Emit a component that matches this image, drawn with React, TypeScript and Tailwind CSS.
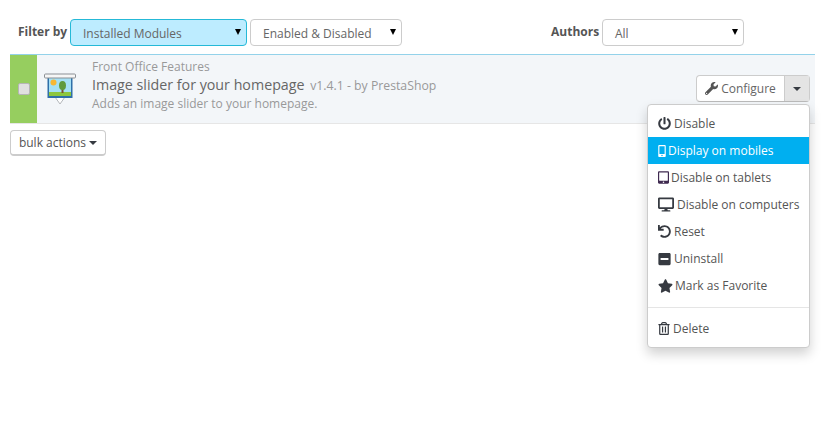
import { FaPowerOff, FaMobileAlt, FaTabletAlt, FaDesktop, FaUndo, FaMinusSquare, FaStar, FaRegTrashAlt, FaWrench } from "react-icons/fa";
import type { ReactNode } from "react";

const font = { fontFamily: '"Open Sans", sans-serif' };

const Select = ({ label, className }: { label: string; className: string }) => (
  <div className={`h-[27px] flex items-center justify-between rounded border pl-[12px] pr-[5px] text-[12px] text-[#666] ${className}`}>
    <span className="pt-[3px]">{label}</span>
    <span className="mb-[1px] border-x-[3.5px] border-x-transparent border-t-[6px] border-t-black" />
  </div>
);

const SliderIcon = () => (
  <svg width="32" height="32" viewBox="0 0 32 32">
    <path d="M11 24l5 7 5-7z" fill="#fff" stroke="#b4b8bc" />
    <rect x="3.5" y="5" width="25" height="20" fill="#2f6fa8" />
    <rect x="5" y="5" width="22" height="18" fill="#a5e0f5" />
    <rect x="5" y="19" width="22" height="4" fill="#8cc63f" />
    <circle cx="9.5" cy="9.5" r="3" fill="#f7b733" />
    <rect x="17.5" y="14" width="2" height="6" fill="#7a5230" />
    <ellipse cx="18.5" cy="12.5" rx="3.5" ry="4.5" fill="#5f9a3c" />
    <rect x="0.5" y="1" width="31" height="4" rx="1" fill="#f6f6f6" stroke="#8a8f94" />
  </svg>
);

const Item = ({ icon, label, active, gap }: { icon: ReactNode; label: string; active?: boolean; gap: string }) => (
  <div className={`h-[27px] flex items-center pl-[10px] text-[12px] ${gap} ${active ? "bg-[#00aff0] text-white" : "text-[#555]"}`}>
    {icon}
    <span>{label}</span>
  </div>
);

export default function App() {
  return (
    <div className="w-[835px] h-[424px] bg-white pt-[19px] relative overflow-hidden" style={font}>
      <div className="flex items-center pl-[18px] h-[27px]">
        <span className="w-[52px] text-[12px] font-bold text-[#555] mb-[2px]">Filter by</span>
        <Select label="Installed Modules" className="w-[177px] bg-[#bdecff] border-[#25b9d7]" />
        <Select label="Enabled & Disabled" className="w-[152px] ml-[3px] border-[#ccc]" />
        <span className="ml-[149px] w-[51px] text-[12px] font-bold text-[#555] mb-[2px]">Authors</span>
        <Select label="All" className="w-[142px] border-[#ccc]" />
      </div>

      <div className="mt-[8px] mx-[10px] w-[805px] h-[70px] flex bg-[#f3f6f9] border-t border-b border-t-[#93d2ea] border-b-[#e6e6e6]">
        <div className="w-[27px] bg-[#96ce5f] flex items-center justify-center">
          <span className="w-[12px] h-[12px] rounded-[2px] bg-[#e0e0e0] border border-[#b5b5b5]" />
        </div>
        <div className="w-[55px] flex items-center pl-[7px]">
          <SliderIcon />
        </div>
        <div className="flex-1 pt-[4px] text-[#999]">
          <div className="text-[12px] leading-[16px]">Front Office Features</div>
          <div className="text-[14.25px] leading-[20px] text-[#666]">
            Image slider for your homepage <span className="ml-[2px] text-[12.25px] text-[#999]">v1.4.1 - by PrestaShop</span>
          </div>
          <div className="text-[12px] leading-[16px]">Adds an image slider to your homepage.</div>
        </div>
        <div className="flex h-[27px] mt-[20px] mr-[5px] rounded border border-[#ccc] border-b-[#bbb] bg-white text-[12px] text-[#666]">
          <div className="w-[88px] flex items-center justify-center gap-[3px] border-r border-[#ccc]">
            <FaWrench className="w-[13px] h-[13px] text-[#555]" />
            <span>Configure</span>
          </div>
          <div className="w-[24px] bg-[#e4e4e4] flex items-center justify-center">
            <span className="border-x-[4px] border-x-transparent border-t-[4px] border-t-[#363a41]" />
          </div>
        </div>
      </div>

      <div className="mt-[6px] ml-[10px] w-[96px] h-[26px] flex items-center justify-center gap-[3px] rounded border border-[#ccc] border-b-2 bg-white text-[12px] text-[#555]">
        <span>bulk actions</span>
        <span className="border-x-[4px] border-x-transparent border-t-[4px] border-t-[#363a41]" />
      </div>

      <div className="absolute left-[647px] top-[104px] w-[163px] h-[244px] bg-white rounded border border-[#ccc] shadow-[0_6px_12px_rgba(0,0,0,0.18)] pt-[5px]">
        <Item gap="gap-[3px]" label="Disable" icon={<FaPowerOff className="w-[13px] h-[13px] text-[#363a41]" />} />
        <Item gap="gap-[2px]" active label="Display on mobiles" icon={<FaMobileAlt className="w-[8px] h-[12px] text-white" />} />
        <Item gap="gap-[2px]" label="Disable on tablets" icon={<FaTabletAlt className="w-[11px] h-[13px] text-[#3f2a50]" />} />
        <Item gap="gap-[3px]" label="Disable on computers" icon={<FaDesktop className="w-[16px] h-[15px] text-[#363a41]" />} />
        <Item gap="gap-[3px]" label="Reset" icon={<FaUndo className="w-[13px] h-[13px] text-[#363a41]" />} />
        <Item gap="gap-[3px]" label="Uninstall" icon={<FaMinusSquare className="w-[13px] h-[14px] text-[#363a41]" />} />
        <Item gap="gap-[2px]" label="Mark as Favorite" icon={<FaStar className="w-[15px] h-[14px] text-[#363a41]" />} />
        <div className="h-px bg-[#e5e5e5] mt-[8px] mb-[7px]" />
        <Item gap="gap-[3px]" label="Delete" icon={<FaRegTrashAlt className="w-[12px] h-[13px] text-[#363a41]" />} />
      </div>
    </div>
  );
}
